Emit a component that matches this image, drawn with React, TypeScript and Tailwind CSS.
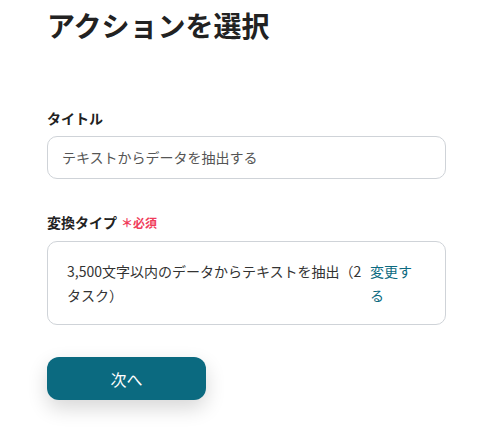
import React from "react";

export default function App() {
  const font = { fontFamily: '"Noto Sans CJK JP", "Noto Sans", sans-serif' };
  return (
    <div className="w-[489px] h-[436px] bg-white overflow-hidden" style={font}>
      <div className="pl-[47px] pr-[43px] pt-[4px]">
        <h1 className="text-[28px] leading-[42px] font-bold text-[#222]">アクションを選択</h1>
        <div className="mt-[62px] text-[14px] leading-[21px] font-bold text-[#222]">タイトル</div>
        <div className="mt-[7px] h-[43px] rounded-[10px] border border-[#cfd3d8] flex items-center px-[14px] text-[14px] text-[#555]">
          テキストからデータを抽出する
        </div>
        <div className="mt-[33px] flex items-baseline gap-[4px] leading-[21px]">
          <span className="text-[14px] font-bold text-[#222]">変換タイプ</span>
          <span className="text-[12px] font-bold text-[#f03c5a]">＊必須</span>
        </div>
        <div className="mt-[8px] h-[84px] rounded-[10px] border border-[#cfd3d8] flex items-center pl-[19px] pr-[29px] text-[14px] leading-[24px]">
          <div className="flex-1 text-[#333]">3,500文字以内のデータからテキストを抽出（2タスク）</div>
          <div className="w-[46px] ml-[3px] text-[#0b6a80]">変更する</div>
        </div>
        <button className="mt-[32px] w-[159px] h-[43px] rounded-[12px] bg-[#0b6a80] text-white text-[16px] shadow-[0_8px_20px_rgba(0,0,0,0.16)]">
          次へ
        </button>
      </div>
    </div>
  );
}
